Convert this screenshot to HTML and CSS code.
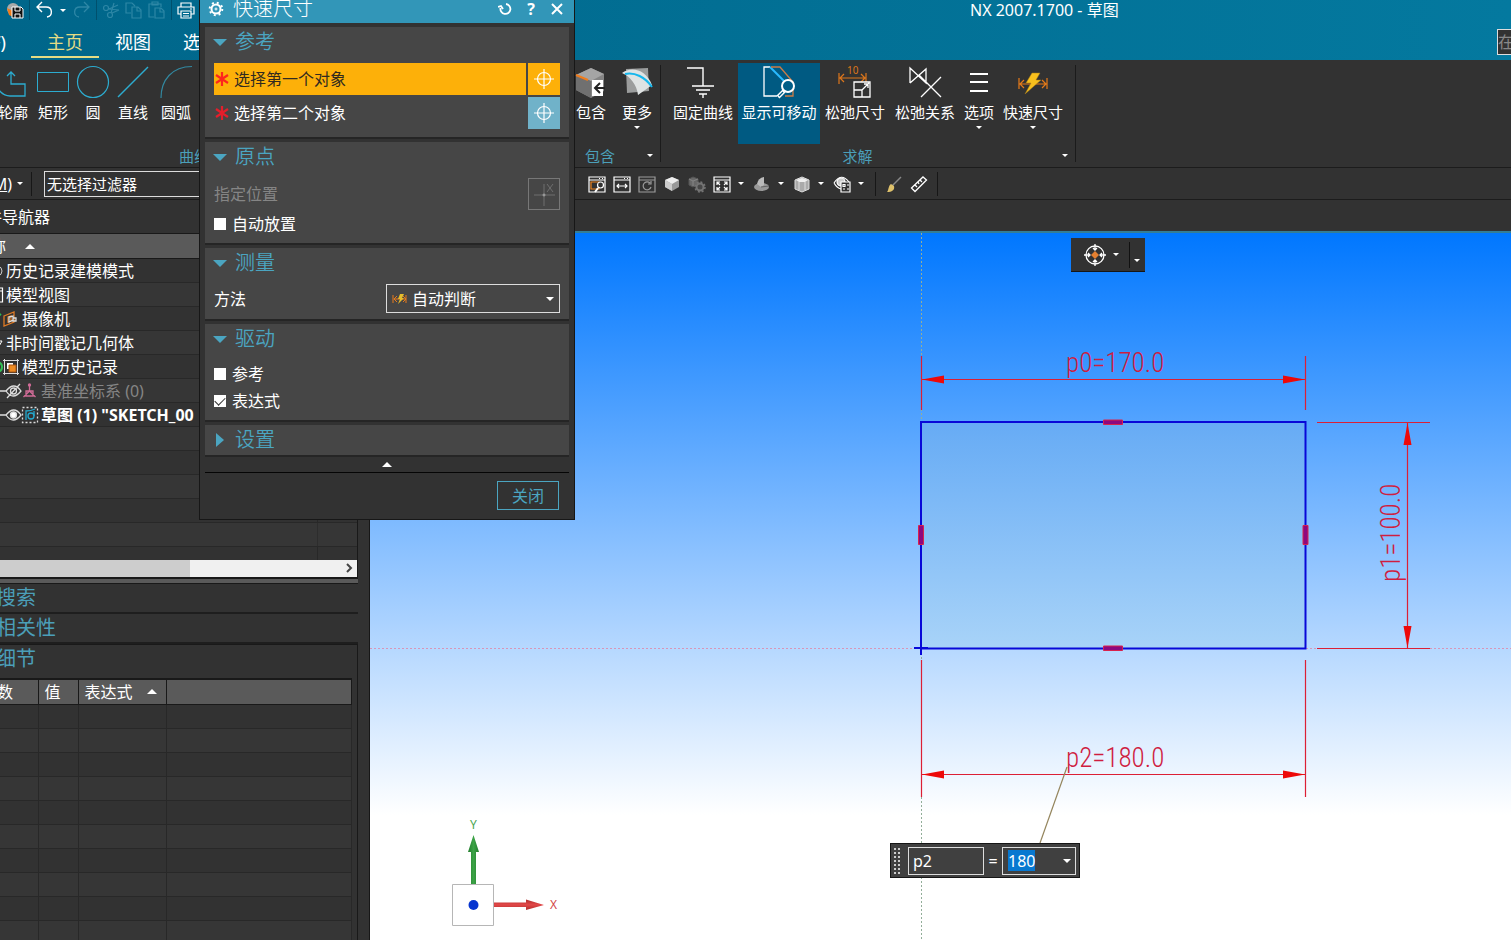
FILE: index.html
```html
<!DOCTYPE html>
<html lang="zh-CN">
<head>
<meta charset="utf-8">
<title>NX 2007.1700 - 草图</title>
<link rel="stylesheet" href="styles.css">
</head>
<body>
<div class="app">
  <header class="header">
    <div class="title-row">
      <div class="quick">
        <button class="q-btn" aria-label="保存"><svg width="18" height="18"><circle cx="7" cy="8" r="6" fill="#a9a9a9"/><path d="M1 7l6 3v6l-4-2z" fill="#f07c1c"/><path d="M6 6h9l2 2v9H6z" fill="#111" stroke="#fff"/><path d="M9 6v4h5V6M9 17v-4h5v4" fill="none" stroke="#fff"/></svg></button>
        <i class="q-sep"></i>
        <button class="q-btn" aria-label="撤销"><svg width="18" height="18" fill="none" stroke="#fff" stroke-width="1.4"><path d="M7 1L2 6l5 5M2 6h9c7 0 7 9 1 10"/></svg></button>
        <i class="caret q-caret"></i>
        <button class="q-btn" aria-label="重做"><svg width="18" height="18" fill="none" stroke="#2d87a6" stroke-width="1.3"><path d="M11 1l5 5-5 5M16 6H7c-7 0-7 9-1 10"/></svg></button>
        <i class="q-sep"></i>
        <button class="q-btn" aria-label="剪切"><svg width="18" height="18" fill="none" stroke="#2d87a6" stroke-width="1.2"><circle cx="4" cy="7" r="2.5"/><circle cx="8" cy="14" r="2.5"/><path d="M6 8l11 1M9 12l3-10M7 8l9-4M10 12l7-3"/></svg></button>
        <button class="q-btn" aria-label="复制"><svg width="18" height="18" fill="none" stroke="#2d87a6" stroke-width="1.2"><path d="M6 12H1V2h6l3 3M7 6h6l3 3v8H7zM12 6v4h4"/></svg></button>
        <button class="q-btn" aria-label="粘贴"><svg width="18" height="18" fill="none" stroke="#2d87a6" stroke-width="1.2"><path d="M6 16H1V3h12v3M4 1h6v3H4zM7 7h6l3 3v7H7zM12 7v4h4"/></svg></button>
        <i class="q-sep"></i>
        <button class="q-btn" aria-label="打印"><svg width="18" height="18" fill="none" stroke="#fff" stroke-width="1.2"><path d="M4 6V2h10v4M4 13H1V6h16v7h-3M4 10h10v7H4zM6 12.500h6M6 15h6M13 8h2"/></svg></button>
      </div>
      <div class="app-title">NX 2007.1700 - 草图</div>
    </div>
    <div class="tab-row">
      <nav class="tabs">
        <a class="tab tab-file" href="#">文件(F)</a>
        <a class="tab tab-on" href="#">主页</a>
        <a class="tab" href="#">视图</a>
        <a class="tab" href="#">选择</a>
      </nav>
      <input class="find" type="text" placeholder="在" aria-label="查找">
    </div>
  </header>

  <section class="ribbon">
    <div class="group group-curve">
      <div class="tools">
        <button class="tool"><svg width="32" height="32" fill="none" stroke="#2cacd0" stroke-width="1.300"><path d="M-4 9c2 12 8 21 17 21h15V18H14V6M10 10l4-4 4 4"/></svg><span>轮廓</span></button>
        <button class="tool"><svg width="32" height="32" fill="none" stroke="#2cacd0"><path d="M.5 6.500h31v19H.5z"/></svg><span>矩形</span></button>
        <button class="tool"><svg width="32" height="32" fill="none" stroke="#2cacd0" stroke-width="1.200"><circle cx="16" cy="16" r="15.500"/></svg><span>圆</span></button>
        <button class="tool"><svg width="32" height="32" stroke="#2cacd0" stroke-width="1.500"><path d="M1 31L31 1"/></svg><span>直线</span></button>
        <button class="tool tool-arc"><svg width="32" height="32" fill="none" stroke="#3288a0" stroke-width="1.200"><path d="M1 32C1 14 12 .5 32 .5"/></svg><span>圆弧</span></button>
      </div>
      <div class="group-name">曲线</div>
    </div>
    <div class="group group-include">
      <div class="tools">
        <button class="tool tool-cut"><svg width="32" height="32"><path d="M1 9l15-7 13 6v17l-13 7L1 24z" fill="#858585"/><path d="M1 9l15-7 13 6-13 7z" fill="#a5a5a5"/><path d="M1 9l15 6v17L1 24z" fill="#707070"/><path d="M1 9l12 5" stroke="#f07c1c" stroke-width="2"/><path d="M17 14h11v16H17z" fill="#fff"/><path d="M30 22H20m5-5l-5 5 5 5" fill="none" stroke="#222" stroke-width="2"/></svg><span>包含</span></button>
        <button class="tool tool-more"><svg width="32" height="32"><path d="M5 3l22-1 1 23-22 2z" fill="#9b9d9d"/><path d="M1 7C10 0 25 3 31 19L17 29C16 19 9 10 1 7z" fill="#dfe3e3"/><path d="M4 8c10-2 20 3 27 13" fill="none" stroke="#16b7ed" stroke-width="2"/></svg><span>更多</span><i class="caret"></i></button>
      </div>
      <div class="group-name"><span>包含</span><i class="caret"></i></div>
    </div>
    <div class="group group-solve">
      <div class="tools">
        <button class="tool w-md"><svg width="32" height="32" fill="none" stroke="#fff" stroke-width="1.400"><path d="M0 2h16v18M5 20h22M9 24h14M12 28h8M16 28v4"/></svg><span>固定曲线</span></button>
        <button class="tool w-lg tool-on"><svg width="32" height="32" fill="none" stroke="#fff" stroke-width="1.300"><path d="M14 30H1V1h6"/><path d="M7 1l16 16" stroke="#29baff" stroke-width="2"/><path d="M8 1h9l13 15v14h-8" stroke="#cb7c46"/><circle cx="25" cy="20" r="6" fill="#005e87" stroke-width="2"/><path d="M21 25l-6 6" stroke-width="4"/><path d="M20 26l-4 4" stroke="#005e87"/></svg><span>显示可移动</span></button>
        <button class="tool w-md"><svg width="34" height="32" fill="none" stroke="#dc761b" stroke-width="1.200"><path d="M1 7v11M28 7v11M2 12h25M6 8l-4 4 4 4M23 8l4 4-4 4"/><text x="9" y="8" font-size="10" fill="#dc761b" stroke="none">10</text><path d="M16 16h16v15H16zM16 24h8v7M24 24l7-7M26 18h4v4" fill="#323232" stroke="#fff" stroke-width="1.300"/></svg><span>松弛尺寸</span></button>
        <button class="tool w-md"><svg width="32" height="32" fill="none" stroke="#fff" stroke-width="1.300"><path d="M1 17V2l16 15V3L1 17M12 31L32 11M10 9l22 22"/></svg><span>松弛关系</span></button>
        <button class="tool w-sm"><svg width="32" height="32" stroke="#fff" stroke-width="2"><path d="M7 8h18M7 16h18M7 25h18"/></svg><span>选项</span><i class="caret"></i></button>
        <button class="tool w-md"><svg width="32" height="32" fill="none" stroke="#e67b19" stroke-width="1.200"><path d="M2 12v11M30 12v11M3 18h26M7 14l-4 4 4 4M25 14l4 4-4 4"/><path d="M15 7h8l-4 7h5L8 28l6-11H9z" fill="#f8c01d" stroke="#a77b19" stroke-width=".5"/></svg><span>快速尺寸</span><i class="caret"></i></button>
      </div>
      <div class="group-name"><span>求解</span><i class="caret"></i></div>
    </div>
  </section>

  <section class="bar">
    <div class="bar-left">
      <button class="menu-btn"><span>菜单(<u>M</u>)</span><i class="caret"></i></button>
      <i class="bar-sep"></i>
      <select class="filter" aria-label="选择过滤器"><option>无选择过滤器</option></select>
    </div>
    <div class="bar-tools">
      <button aria-label="缩放窗口"><svg width="18" height="18" fill="none" stroke="#fff" stroke-width="1.200"><path d="M1 2h16v15H1zM1 5h16M11 3.500h1M14 3.500h1"/><path d="M3 7h8v7H3z" stroke="#ed821d"/><circle cx="12.500" cy="10" r="3" fill="#323232"/><path d="M10 13l-3 4" stroke-width="2"/></svg></button>
      <button aria-label="适合宽度"><svg width="18" height="18" fill="none" stroke="#fff" stroke-width="1.200"><path d="M1 2h16v15H1zM1 5h16M11 3.500h1M14 3.500h1M4 11h10M6 9l-2 2 2 2M12 9l2 2-2 2"/></svg></button>
      <button aria-label="刷新"><svg width="18" height="18" fill="none" stroke="#9b9b9b" stroke-width="1.200"><path d="M1 2h16v15H1zM1 5h16M12 8a4 4 0 1 0 1 4M10 9h3V6"/></svg></button>
      <button aria-label="着色"><svg width="18" height="18"><path d="M2 5l7-3 7 3v7l-7 4-7-4z" fill="#999"/><path d="M2 5l7-3 7 3-7 4z" fill="#eee"/><path d="M2 5l7 4v7l-7-4z" fill="#ccc"/></svg></button>
      <button aria-label="零件"><svg width="18" height="18"><path d="M1 4l4-2 5 2v5l-5 3-4-2z" fill="#686868" stroke="#555"/><path d="M1 4l4 2 5-2M5 6v5" fill="none" stroke="#858585"/><circle cx="12" cy="12" r="3.500" fill="#484848" stroke="#747474" stroke-width="2"/><circle cx="12" cy="12" r="5" fill="none" stroke="#747474" stroke-width="1.500" stroke-dasharray="2 1.900"/></svg></button>
      <button class="with-caret" aria-label="适合窗口"><svg width="18" height="18" fill="none" stroke="#fff" stroke-width="1.200"><path d="M1 2h16v15H1zM1 5h16M4 10V7h3M11 7h3v3M4 12v3h3M14 12v3h-3M4 7l3 3M14 7l-3 3M4 15l3-3M14 15l-3-3"/></svg><i class="caret"></i></button>
      <button class="with-caret" aria-label="剪切截面"><svg width="18" height="18"><ellipse cx="8.500" cy="12" rx="7.500" ry="4" fill="#999"/><path d="M4 9q1-6 7-7v8l-3 2z" fill="#bbb"/><path d="M8 12l8-1" stroke="#666" fill="none"/></svg><i class="caret"></i></button>
      <button class="with-caret" aria-label="视图方向"><svg width="18" height="18"><path d="M2 5l7-3 7 3v9l-7 3-7-3z" fill="#aaa" stroke="#ddd"/><path d="M3 5l6-2 6 2-3 2H6z" fill="#eee"/><path d="M6 7v8M12 7v8" fill="none" stroke="#ddd"/></svg><i class="caret"></i></button>
      <button class="with-caret" aria-label="显示和隐藏"><svg width="18" height="18" fill="none" stroke="#fff" stroke-width="1.200"><path d="M1 8q7-11 15-1M1 8q3 5 7 6"/><circle cx="8" cy="7" r="4" fill="#ccc"/><path d="M8 7h9v10H8z" fill="#323232"/><path d="M10 9.500h2v2h-2zM10 14h2M14 10h2M14 14h2"/></svg><i class="caret"></i></button>
      <i class="bar-sep"></i>
      <button aria-label="画笔"><svg width="18" height="18"><path d="M7 11L16 2" stroke="#888" stroke-width="1.500"/><path d="M6 9l3 2c1 4-2 6-7 6 2-2 1-6 4-8z" fill="#dec16b"/></svg></button>
      <button aria-label="测量"><svg width="18" height="18" fill="none" stroke="#fff" stroke-width="1.300"><path d="M1.500 13L13 2l3.500 3L5 16.500zM5 10l2 2M8 7l1 2M10 5l2 2"/></svg></button>
      <i class="bar-sep"></i>
    </div>
  </section>

  <main class="work">
    <aside class="side">
      <div class="side-title"><span>部件导航器</span></div>
      <div class="tree">
        <div class="tree-head"><span>名称</span><i class="caret-up"></i></div>
        <ul class="tree-list">
          <li><svg width="6" height="20" fill="none" stroke="#ccc"><path d="M-2 5q4 1 4 5t-4 5"/></svg>历史记录建模模式</li>
          <li><svg width="6" height="20" fill="none" stroke="#fff" stroke-width="1.200"><path d="M-2 3h4.500v14H-2M-2 6h4"/></svg>模型视图</li>
          <li><svg width="22" height="20" fill="none" stroke="#df7a24" stroke-width="1.300"><path d="M-3 8l4-3" stroke="#29be57" stroke-width="2"/><path d="M4 7l10-4v10l-10 4zM8 8l3-1v5l-3 1z"/><path d="M9 8l4-1v4l-4 2zM13 9h3v3h-3z" stroke="#ddd"/></svg>摄像机</li>
          <li><svg width="6" height="20" fill="none" stroke="#fff"><path d="M-2 8h4l-4 7"/></svg>非时间戳记几何体</li>
          <li><svg width="22" height="20" fill="none" stroke="#ddd"><path d="M-2 5q4 1 4 5t-4 5" stroke="#32be54" stroke-width="2"/><path d="M4.500 2v16M17.500 2v16M3 3.500h16M3 16.500h16"/><path d="M7 6h6v6H7z" fill="#fff" stroke="none"/><path d="M9 8h7v7H9z" fill="#ee8b22" stroke="#aa5715"/></svg>模型历史记录</li>
          <li class="dim"><svg width="41" height="20" fill="none" stroke="#ddd" stroke-width="1.300"><path d="M0 10h6M6 10q8-10 15 0-8 10-15 0M7 17L20 3"/><circle cx="13.500" cy="10" r="3"/><path d="M29.500 10V3M29.500 10l-6 6M29.500 10l6 6M26 10h7v5h-7z" stroke="#d16c97"/><circle cx="29.500" cy="4" r="1" stroke="#d16c97"/></svg>基准坐标系 (0)</li>
          <li class="strong"><svg width="41" height="20" fill="none" stroke="#ddd" stroke-width="1.300"><path d="M0 10h6M6 10q8-10 15 0-8 10-15 0"/><circle cx="13.500" cy="10" r="3" fill="#fff"/><path d="M22.500 2.500h15v15h-15z" stroke-dasharray="2"/><path d="M26 15V6q5 0 9-2M34 6v5" stroke="#24a9ce"/><circle cx="31" cy="11" r="3" stroke="#24a9ce"/></svg>草图 (1) "SKETCH_00</li>
          <li></li><li></li><li></li><li></li><li></li><li></li>
        </ul>
        <div class="hscroll"><div class="thumb"></div><svg width="18" height="16" fill="none" stroke="#444" stroke-width="2"><path d="M8 4l4 4-4 4"/></svg></div>
      </div>
      <div class="splitter"></div>
      <button class="fold"><span>搜索</span></button>
      <button class="fold"><span>相关性</span></button>
      <div class="details">
        <h2 class="fold-name">细节</h2>
        <table class="params">
          <colgroup><col class="c1"><col class="c2"><col class="c3"><col></colgroup>
          <thead><tr><th><span class="cut">参数</span></th><th>值</th><th>表达式<i class="caret-up"></i></th><th></th></tr></thead>
          <tbody>
            <tr><td></td><td></td><td></td><td></td></tr><tr><td></td><td></td><td></td><td></td></tr>
            <tr><td></td><td></td><td></td><td></td></tr><tr><td></td><td></td><td></td><td></td></tr>
            <tr><td></td><td></td><td></td><td></td></tr><tr><td></td><td></td><td></td><td></td></tr>
            <tr><td></td><td></td><td></td><td></td></tr><tr><td></td><td></td><td></td><td></td></tr>
            <tr><td></td><td></td><td></td><td></td></tr><tr><td></td><td></td><td></td><td></td></tr>
          </tbody>
        </table>
      </div>
    </aside>
    <section class="view">
      <div class="view-tabs"></div>
      <div class="canvas">
        <svg class="drawing" width="100%" height="100%">
          <defs>
            <linearGradient id="face" x1="0" y1="0" x2="0" y2="1"><stop offset="0" stop-color="#66abf5"/><stop offset="1" stop-color="#a8d3f8"/></linearGradient>
            <linearGradient id="green" x1="0" x2="1"><stop offset="0" stop-color="#227d2d"/><stop offset=".5" stop-color="#3ca346"/><stop offset="1" stop-color="#227d2d"/></linearGradient>
            <linearGradient id="red" x1="0" y1="0" x2="0" y2="1"><stop offset="0" stop-color="#b12c2c"/><stop offset=".5" stop-color="#e24848"/><stop offset="1" stop-color="#b12c2c"/></linearGradient>
          </defs>
          <line x1="0" y1="415.500" x2="100%" y2="415.500" stroke="#d796b9" stroke-dasharray="2 2"/>
          <g transform="translate(-370 -233)">
            <path d="M921.500 233v707" stroke="#92ae99" stroke-dasharray="2 2"/>
            <rect x="921" y="422" width="384.500" height="226.500" fill="url(#face)" stroke="#0808d8" stroke-width="2"/>
            <path d="M914 648h14M921 641v14" stroke="#0808d8" stroke-width="2"/>
            <g fill="#8d087f" stroke="#d9224c"><path d="M1103.500 420h19v4.500h-19zM1103.500 646h19v4.500h-19zM918.500 525.500h5v19h-5zM1303 525.500h5v19h-5z"/></g>
            <g fill="none" stroke="#dc1f35" stroke-width="1.200"><path d="M921.500 356v54M1305.500 356v54M921.500 379.500h384M921.500 660v137M1305.500 660v137M921.500 774.500h384M1317 422.500h113M1317 648.500h113M1407.500 423v225"/></g>
            <path fill="#ed0909" d="M922 379.500l22-4v8zM1305 379.500l-22-4v8zM922 774.500l22-4v8zM1305 774.500l-22-4v8zM1407.500 423l-4 22h8zM1407.500 648l-4-22h8z"/>
            <path d="M1067 767l-27 76" stroke="#94855d" stroke-width="1.200"/>
            <g class="dims"><text x="1066" y="372">p0=170.0</text><text x="1066" y="767">p2=180.0</text><text transform="translate(1400 582) rotate(-90)">p1=100.0</text></g>
            <path d="M452.500 884.500h41v41h-41z" fill="#fff" stroke="#b6b6b6"/>
            <circle cx="473.500" cy="905" r="5" fill="#0735cf"/>
            <path d="M471 884v-32h-3l5.500-17 5.500 17h-3v32z" fill="url(#green)"/>
            <path d="M494 902.500h32v-3l18 5.500-18 5v-3h-32z" fill="url(#red)"/>
            <text x="470" y="829" class="axis axis-y">Y</text><text x="550" y="909" class="axis axis-x">X</text>
          </g>
        </svg>
        <div class="snap">
          <button class="snap-main" aria-label="捕捉点"><svg width="24" height="24" fill="none" stroke="#fff" stroke-width="1.300"><circle cx="12" cy="12" r="9"/><path d="M12 1v6M12 23v-6M1 12h6M23 12h-6M10 5l2 2 2-2M10 19l2-2 2 2M5 10l2 2-2 2M19 10l-2 2 2 2"/><path d="M12 8l4 4-4 4-4-4z" fill="#e58030" stroke="none"/></svg><i class="caret"></i></button>
          <button class="snap-more" aria-label="更多选项"><i class="caret"></i></button>
        </div>
        <div class="entry">
          <i class="grip"></i>
          <input class="entry-name" type="text" value="p2" aria-label="名称">
          <span class="equals">=</span>
          <div class="entry-combo"><input class="entry-value" type="text" value="180" aria-label="值"><button aria-label="展开"><i class="caret caret-lg"></i></button></div>
        </div>
      </div>
    </section>
  </main>

  <section class="dialog" role="dialog" aria-label="快速尺寸">
    <div class="dialog-title">
      <svg width="16" height="16" fill="none" stroke="#fff"><circle cx="8" cy="8" r="4.500" stroke-width="2"/><circle cx="8" cy="8" r="1"/><circle cx="8" cy="8" r="6.300" stroke-width="2" stroke-dasharray="2 2.950"/></svg>
      <h1>快速尺寸</h1>
      <button aria-label="重置"><svg width="14" height="14" fill="none" stroke="#fff" stroke-width="1.800"><path d="M8 2a5 5 0 1 1-5.500 4M0 5l3-1 2 3"/></svg></button>
      <button class="help" aria-label="帮助">?</button>
      <button aria-label="关闭对话框"><svg width="14" height="14" stroke="#fff" stroke-width="2"><path d="M2 2l10 10M12 2L2 12"/></svg></button>
    </div>
    <div class="dialog-body">
      <section class="block">
        <h2><i class="tri"></i>参考</h2>
        <div class="pick pick-on"><button class="pick-label"><svg width="14" height="14" stroke="#fd251e" stroke-width="2.200"><path d="M7 0v14M1 3l12 8M13 3L1 11"/></svg>选择第一个对象</button><button class="pick-icon" aria-label="选择第一个对象"><svg width="20" height="20" fill="none" stroke="#fff" stroke-width="1.200"><circle cx="10" cy="10" r="6.500"/><path d="M10 0v20M0 10h20"/></svg></button></div>
        <div class="pick"><button class="pick-label"><svg width="14" height="14" stroke="#e51e2b" stroke-width="2.200"><path d="M7 0v14M1 3l12 8M13 3L1 11"/></svg>选择第二个对象</button><button class="pick-icon" aria-label="选择第二个对象"><svg width="20" height="20" fill="none" stroke="#fff" stroke-width="1.200"><circle cx="10" cy="10" r="6.500"/><path d="M10 0v20M0 10h20"/></svg></button></div>
      </section>
      <section class="block">
        <h2><i class="tri"></i>原点</h2>
        <div class="place"><span>指定位置</span><button disabled aria-label="指定位置"><svg width="30" height="30" fill="none" stroke="#6f6f6f"><path d="M15 5v22M5 16h21M18 5l6 8M24 5l-6 8"/><circle cx="15" cy="16" r="1" stroke="#aaa"/></svg></button></div>
        <label class="check"><input type="checkbox">自动放置</label>
      </section>
      <section class="block">
        <h2><i class="tri"></i>测量</h2>
        <div class="method"><label for="method">方法</label>
          <div class="combo"><svg width="16" height="12" fill="none" stroke="#e77b1c"><path d="M1 2v8M14 2v8M2 6h12M5 3L2 6l3 3M11 3l3 3-3 3"/><path d="M8 1h4l-2 4h2l-6 6 2-5H6z" fill="#e6bd2c" stroke="none"/></svg><select id="method"><option>自动判断</option></select><i class="caret caret-lg"></i></div>
        </div>
      </section>
      <section class="block">
        <h2><i class="tri"></i>驱动</h2>
        <label class="check"><input type="checkbox">参考</label>
        <label class="check"><input type="checkbox" checked>表达式</label>
      </section>
      <section class="block block-shut"><h2><i class="tri tri-right"></i>设置</h2></section>
      <button class="collapse" aria-label="收起"><i class="caret-up"></i></button>
      <div class="actions"><button class="close">关闭</button></div>
    </div>
  </section>
</div>
</body>
</html>
```
FILE: styles.css
```css
* { box-sizing: border-box; }
body { margin: 0; background: #323232; color: #fff; font: 16px/24px "Noto Sans", "Noto Sans CJK SC", sans-serif; }
button { margin: 0; padding: 0; border: 0; background: none; color: inherit; font: inherit; }
input, select { margin: 0; font: inherit; color: inherit; border-radius: 0; outline: 0; }
svg { display: block; flex: none; }
h1, h2 { margin: 0; font-weight: 400; }
i { display: block; flex: none; }
.app { position: relative; height: 100vh; overflow: hidden; display: flex; flex-direction: column; }

.caret { width: 0; border: 3px solid transparent; border-top-color: #fff; border-bottom: 0; }
.caret-lg { border-width: 4px 4px 0; }
.caret-up { width: 0; border: 5px solid transparent; border-bottom-color: #fff; border-top: 0; }

/* Header */
.header { flex: none; height: 60px; background: linear-gradient(90deg, #00668a, #04799f); }
.title-row { display: flex; height: 26px; }
.quick { display: flex; align-items: center; width: 970px; height: 20px; padding-left: 6px; gap: 5px; }
.q-sep { width: 1px; height: 20px; background: #00506d; }
.q-caret { margin: 0 2px; }
.app-title { line-height: 20px; }
.tab-row { display: flex; justify-content: space-between; height: 34px; }
.tabs { display: flex; overflow: hidden; height: 32px; }
.tab { padding: 0 16px; font-size: 18px; line-height: 32px; color: #fff; text-decoration: none; white-space: nowrap; }
.tab-file { display: flex; justify-content: flex-end; width: 31px; padding: 0 25px 0 0; }
.tab-on { color: #e5dc84; border-bottom: 2px solid #e5dc84; }
.find { width: 14px; height: 26px; margin-top: 3px; padding: 0; background: #323232; border: 1px solid #ddd; border-right: 0; }
.find::placeholder { color: #888; opacity: 1; }

/* Ribbon */
.ribbon { flex: none; display: flex; height: 108px; border-bottom: 1px solid #1c1c1c; overflow: hidden; }
.group { display: flex; flex-direction: column; padding-top: 3px; flex: none; }
.group-curve { width: 575px; }
.group-include { width: 86px; }
.group-solve { width: 415px; }
.group-include, .group-solve { background: linear-gradient(#1b1b1b, #1b1b1b) right 5px / 1px 97px no-repeat; }
.group-solve .tools { padding-left: 7px; }
.group-curve .tools { margin-left: -7px; }
.tools { display: flex; height: 82px; }
.tool { display: flex; flex-direction: column; align-items: center; width: 40px; padding-top: 3px; font-size: 15px; line-height: 20px; white-space: nowrap; }
.tool svg { overflow: visible; }
.tool span { margin: 4px 0; }
.tool-arc { width: 46px; }
.tool-cut { width: 32px; }
.tool-more { width: 44px; margin-left: 8px; }
.w-sm { width: 38px; }
.w-md { width: 70px; }
.w-lg { width: 82px; }
.tool-on { background: #005a82; }
.tool text { font-family: "Noto Sans", sans-serif; }
.group-name { display: flex; align-items: center; height: 23px; padding-right: 8px; color: #4b9fb9; font-size: 15px; line-height: 20px; }
.group-name span { flex: 1; text-align: center; padding-right: 8px; }
.group-include .group-name span { padding-right: 22px; }
.group-curve .group-name { padding-left: 179px; }

/* Selection and view toolbar */
.bar { flex: none; display: flex; height: 32px; border-bottom: 1px solid #1c1c1c; }
.bar-left { display: flex; align-items: center; width: 575px; }
.menu-btn { display: flex; align-items: center; justify-content: flex-end; width: 23px; gap: 5px; white-space: nowrap; overflow: hidden; }
.bar-sep { width: 1px; height: 24px; background: #171717; }
.bar-left .bar-sep { margin: 0 12px 0 8px; }
.filter { width: 300px; height: 26px; padding: 0 2px; border: 1px solid #ddd; background: #323232; font-size: 15px; appearance: none; }
.bar-tools { display: flex; align-items: center; padding-left: 13px; gap: 7px; }
.with-caret { display: flex; align-items: center; width: 33px; gap: 7px; }
.bar-tools .bar-sep { margin: 0 2px; }

/* Navigator */
.work { flex: 1; min-height: 0; display: grid; grid-template-columns: 370px minmax(0, 1fr); }
.side { min-height: 0; overflow: hidden; padding-right: 11px; border-right: 1px solid #171717; }
.side-title { display: flex; justify-content: flex-end; width: 50px; height: 33px; line-height: 34px; white-space: nowrap; }
.tree { border: 1px solid #191919; border-left: 0; }
.tree-head { display: flex; align-items: center; height: 25px; background: #5a5a5a; border-bottom: 1px solid #191919; }
.tree-head span { display: flex; justify-content: flex-end; width: 6px; white-space: nowrap; margin-right: 19px; }
.tree-list { margin: 0; padding: 0; height: 301px; overflow: hidden; list-style: none; background: linear-gradient(#282828, #282828) 317px 0 / 1px 100% no-repeat; }
.tree-list li { display: flex; align-items: center; height: 24px; border-bottom: 1px solid #282828; white-space: nowrap; }
.tree-list li:nth-child(even) { background: rgba(255, 255, 255, .025); }
.dim { color: #858585; }
.strong { font-weight: 700; }
.hscroll { display: flex; justify-content: space-between; height: 17px; background: #f0f0f0; }
.thumb { width: 190px; background: #cdcdcd; }
.splitter { height: 6px; background: #5a5a5a; border: solid #191919; border-width: 1px 0; }
.fold { display: block; width: 100%; height: 30px; border-bottom: 2px solid #1e1e1e; color: #4b9fb9; font-size: 20px; line-height: 28px; text-align: left; }
.fold span { margin-left: -4px; }
.details { border: 1px solid #191919; border-left: 0; padding-right: 5px; }
.fold-name { height: 33px; margin-left: -4px; color: #4b9fb9; font-size: 20px; line-height: 28px; }
.params { width: 100%; table-layout: fixed; border-collapse: collapse; border-top: 2px solid #191919; border-right: 1px solid #191919; }
.c1 { width: 38px; }
.c2 { width: 40px; }
.c3 { width: 88px; }
.params th { height: 25px; padding: 0 0 0 6px; background: #5a5a5a; border: solid #191919; border-width: 0 1px 1px 0; font-weight: 400; line-height: 24px; text-align: left; white-space: nowrap; }
.params th:first-child { padding: 0; }
.params .caret-up { display: inline-block; margin: 0 0 4px 14px; }
.cut { display: flex; justify-content: flex-end; width: 13px; }
.params td { height: 24px; padding: 0; border: solid #282828; border-width: 0 1px 1px 0; }
.params tr:nth-child(even) td { background: #363636; }

/* Graphics view */
.view { display: flex; flex-direction: column; min-height: 0; }
.view-tabs { flex: none; height: 31px; }
.canvas { position: relative; flex: 1; min-height: 0; border-top: 2px solid #337e96; background: linear-gradient(#0077ff, #fff 582px); }
.drawing { position: absolute; inset: 0; }
.dims { fill: #cf1d3f; font: 300 27px "Roboto Condensed", "Liberation Sans Narrow", sans-serif; }
.axis { font: 12px "Noto Sans", sans-serif; }
.axis-y { fill: #48a451; }
.axis-x { fill: #d34848; }
.snap { position: absolute; left: 701px; top: 5px; display: flex; width: 74px; height: 34px; background: #323232; border-bottom: 1px solid #161616; }
.snap-main { display: flex; align-items: center; width: 59px; gap: 6px; padding-left: 12px; background: linear-gradient(#111, #111) right / 1px 26px no-repeat; }
.snap-more { padding: 12px 0 0 4px; }
.entry { position: absolute; left: 520px; top: 610px; display: flex; align-items: center; width: 190px; height: 35px; padding: 0 3px 0 2px; background: #404040; border: 1px solid #161616; }
.grip { width: 8px; height: 28px; margin-right: 7px; background: radial-gradient(circle, #ccc 1px, transparent 1px) 0 0 / 4px 4px; }
.entry-name { width: 76px; height: 28px; padding: 0 4px; background: transparent; border: 1px solid #ddd; }
.equals { width: 18px; text-align: center; }
.entry-combo { display: flex; flex: 1; height: 28px; border: 1px solid #ddd; }
.entry-value { width: 60px; padding: 0 5px; border: 0; background: linear-gradient(#0878d0, #0878d0) 5px 2px / 27px 21px no-repeat; }

/* Dialog */
.dialog { position: absolute; left: 199px; top: 0; width: 376px; background: #323232; border: 1px solid #171717; border-top: 0; }
.dialog-title { display: flex; align-items: center; height: 23px; padding: 0 10px 0 8px; gap: 13px; background: #3296b8; }
.dialog-title h1 { flex: 1; margin-left: -4px; font-size: 20px; font-weight: 300; line-height: 18px; height: 23px; }
.dialog-title svg, .dialog-title button { margin-bottom: 5px; }
.dialog-title button svg { margin: 0; }
.help { width: 12px; font-weight: 700; line-height: 18px; }
.dialog-body { padding: 4px 5px 0; }
.block { margin-bottom: 3px; padding: 0 9px 6px; background: #464646; border-bottom: 2px solid #252525; }
.block h2 { display: flex; align-items: center; gap: 8px; height: 36px; padding-bottom: 6px; margin-left: -1px; color: #4ba5c1; font-size: 20px; font-weight: 350; line-height: 30px; }
.tri { width: 14px; border: 7px solid transparent; border-top-color: #4ba5c1; border-bottom: 0; }
.tri-right { width: 8px; margin: 0 3px; border: 7px solid transparent; border-width: 7px 0 7px 8px; border-left-color: #4ba5c1; }
.pick { display: flex; gap: 2px; height: 32px; margin-bottom: 2px; }
.pick-label { display: flex; align-items: center; flex: 1; gap: 5px; padding-left: 1px; }
.pick-icon { display: flex; align-items: center; justify-content: center; width: 32px; background: #70b2c9; }
.pick-on .pick-label { color: #302a20; }
.pick-on .pick-label, .pick-on .pick-icon { background: #fdb009; }
.place { display: flex; align-items: center; justify-content: space-between; height: 32px; color: #858585; }
.place button { width: 32px; height: 32px; border: 1px solid #777; }
.check { display: flex; align-items: center; gap: 6px; height: 27px; }
.check input { width: 12px; height: 12px; background: #fff; appearance: none; }
.check input:checked::before { content: ""; display: block; width: 9px; height: 5px; margin: 2px 1px; border: solid #333; border-width: 0 0 1px 1px; transform: rotate(-45deg); }
.method { display: flex; align-items: center; justify-content: space-between; height: 29px; }
.combo { display: flex; align-items: center; width: 174px; height: 29px; padding: 0 5px; border: 1px solid #ddd; }
.combo select { flex: 1; padding: 0 0 0 4px; border: 0; background: #464646; appearance: none; }
.block-shut { padding-bottom: 0; margin: 0; }
.block-shut h2 { height: 30px; padding: 0; }
.collapse { display: flex; justify-content: center; align-items: center; width: 100%; height: 16px; border-bottom: 1px solid #050505; }
.actions { display: flex; justify-content: flex-end; padding: 8px 10px 9px; }
.close { width: 62px; height: 29px; border: 1px solid #4ba5c1; color: #4ba5c1; }
```
